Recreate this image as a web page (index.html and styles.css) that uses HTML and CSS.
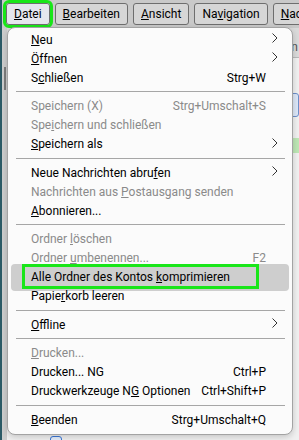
FILE: index.html
```html
<!DOCTYPE html>
<html lang="de">
<head>
<meta charset="UTF-8">
<link rel="stylesheet" href="styles.css">
</head>
<body>
    <div class="window">
        <!-- Menu bar -->
        <div class="menubar">
            <button class="menubtn active"><u>D</u>atei</button>
            <button class="menubtn"><u>B</u>earbeiten</button>
            <button class="menubtn"><u>A</u>nsicht</button>
            <button class="menubtn">Na<u>v</u>igation</button>
            <button class="menubtn"><u>N</u>ach</button>
        </div>

        <!-- Window content behind the menu -->
        <div class="page">
            <div class="gutter"><div class="thumb"></div></div>
            <div class="main">
                <div class="tabstrip"><span class="tab">n</span></div>
                <div class="search"></div>
                <div class="tag"></div>
                <div class="footer"><span class="check"></span></div>
            </div>
        </div>

        <!-- Datei popup -->
        <div class="popup">
            <div class="item"><span class="label"><u>N</u>eu</span><span class="arrow"><svg width="6" height="10" viewBox="0 0 6 10"><path d="M0.5 0.5 L5 5 L0.5 9.5" /></svg></span></div>
            <div class="item"><span class="label"><u>Ö</u>ffnen</span><span class="arrow"><svg width="6" height="10" viewBox="0 0 6 10"><path d="M0.5 0.5 L5 5 L0.5 9.5" /></svg></span></div>
            <div class="item"><span class="label">S<u>c</u>hließen</span><span class="key">Strg+W</span><span class="arrow"></span></div>
            <div class="sep"></div>
            <div class="item off"><span class="label">Speichern (X)</span><span class="key">Strg+Umschalt+S</span><span class="arrow"></span></div>
            <div class="item off"><span class="label">Spe<u>i</u>chern und schließen</span><span class="arrow"></span></div>
            <div class="item"><span class="label"><u>S</u>peichern als</span><span class="arrow"><svg width="6" height="10" viewBox="0 0 6 10"><path d="M0.5 0.5 L5 5 L0.5 9.5" /></svg></span></div>
            <div class="sep"></div>
            <div class="item"><span class="label">Neue Nachrichten abru<u>f</u>en</span><span class="arrow"><svg width="6" height="10" viewBox="0 0 6 10"><path d="M0.5 0.5 L5 5 L0.5 9.5" /></svg></span></div>
            <div class="item off"><span class="label">Nachrichten aus <u>P</u>ostausgang senden</span><span class="arrow"></span></div>
            <div class="item"><span class="label"><u>A</u>bonnieren...</span><span class="arrow"></span></div>
            <div class="sep"></div>
            <div class="item off"><span class="label">Ordner <u>l</u>öschen</span><span class="arrow"></span></div>
            <div class="item off"><span class="label">Ordner <u>u</u>mbenennen...</span><span class="key">F2</span><span class="arrow"></span></div>
            <div class="item hot"><span class="label">Alle Ordner des Kontos <u>k</u>omprimieren</span><span class="arrow"></span><span class="mark"></span></div>
            <div class="item"><span class="label">Papie<u>r</u>korb leeren</span><span class="arrow"></span></div>
            <div class="sep"></div>
            <div class="item"><span class="label"><u>O</u>ffline</span><span class="arrow"><svg width="6" height="10" viewBox="0 0 6 10"><path d="M0.5 0.5 L5 5 L0.5 9.5" /></svg></span></div>
            <div class="sep"></div>
            <div class="item off"><span class="label"><u>D</u>rucken...</span><span class="arrow"></span></div>
            <div class="item"><span class="label">Drucken... NG</span><span class="key">Ctrl+P</span><span class="arrow"></span></div>
            <div class="item"><span class="label">Druckwerkzeuge N<u>G</u> Optionen</span><span class="key">Ctrl+Shift+P</span><span class="arrow"></span></div>
            <div class="sep"></div>
            <div class="item"><span class="label"><u>B</u>eenden</span><span class="key">Strg+Umschalt+Q</span><span class="arrow"></span></div>
        </div>
    </div>
</body>
</html>
```

FILE: styles.css
```css
body, html {
    margin: 0;
    padding: 0;
    font-family: Roboto, "Noto Sans", sans-serif;
    font-size: 12px;
    overflow: hidden;
}

.window {
    position: relative;
    display: flex;
    flex-direction: column;
    width: 299px;
    height: 440px;
    border-left: 2px solid #2b5a66;
    box-sizing: border-box;
    background-color: #f0f0f0;
}

/* Menu bar */
.menubar {
    display: flex;
    gap: 5px;
    height: 28px;
    padding: 3px 0 0 4px;
    box-sizing: border-box;
    background-color: #c9c9c9;
    white-space: nowrap;
    overflow: hidden;
}

.menubtn {
    flex-shrink: 0;
    height: 22px;
    padding: 0 7px;
    font-family: inherit;
    font-size: 12px;
    color: #000;
    background-color: #d6d6d6;
    border: 1px solid #6e6e6e;
    border-radius: 3px;
}

.menubtn.active {
    background-color: #e6e6ee;
    outline: 3px solid #19e619;
}

/* Content behind the popup */
.page {
    flex: 1;
    display: flex;
}

.gutter {
    width: 5px;
    background-color: #cdcdcd;
    padding-top: 39px;
}

.thumb {
    width: 2px;
    height: 23px;
    margin-left: 2px;
    background-color: #7d7d7d;
}

.main {
    flex: 1;
    display: flex;
    flex-direction: column;
    align-items: flex-end;
}

.tabstrip {
    align-self: stretch;
    height: 29px;
    padding-right: 1px;
    text-align: right;
    background-color: #dadada;
    border-bottom: 1px solid #b9b9b9;
}

.tab {
    display: inline-block;
    margin-top: 12px;
    color: #555;
}

.search {
    width: 40px;
    height: 22px;
    margin-top: 35px;
    background-color: #dce7f7;
    border: 1px solid #6d8fc9;
    border-radius: 3px;
}

.tag {
    width: 40px;
    height: 15px;
    margin-top: 21px;
    background-color: #bde6b5;
}

.footer {
    margin-top: auto;
    align-self: stretch;
    height: 4px;
    padding-left: 43px;
}

.check {
    display: block;
    width: 10px;
    height: 10px;
    border: 1px solid #3b78d8;
    border-radius: 3px;
    background-color: #e4eefc;
}

/* Datei popup */
.popup {
    position: absolute;
    left: 5px;
    top: 27px;
    width: 286px;
    padding: 2px 0 5px;
    box-sizing: border-box;
    background-color: #fbfbfb;
    border: 1px solid #a3a3a3;
    border-radius: 8px;
    box-shadow: 0 2px 6px rgba(0, 0, 0, 0.18);
}

.item {
    position: relative;
    z-index: 0;
    display: flex;
    align-items: center;
    height: 19px;
    margin: 0 3px;
    padding: 0 11px 0 20px;
    color: #000;
    white-space: nowrap;
}

.item.off {
    color: #8a8a8a;
}

.label {
    flex: 1;
}

.key {
    padding-left: 6px;
}

.arrow {
    display: flex;
    justify-content: flex-end;
    width: 12px;
    margin-top: -3px;
}

.arrow path {
    fill: none;
    stroke: #333;
    stroke-width: 1;
}

.item.hot::before {
    content: "";
    position: absolute;
    top: -4px;
    bottom: -4px;
    left: 0;
    right: 0;
    z-index: -1;
    border-radius: 4px;
    background-color: #cecece;
}

.mark {
    position: absolute;
    left: 11px;
    top: -4px;
    width: 237px;
    height: 25px;
    box-sizing: border-box;
    border: 3px solid #19e619;
}

.sep {
    height: 1px;
    margin: 4px 7px 4.5px 8px;
    background-color: #a6a6a6;
}
```
